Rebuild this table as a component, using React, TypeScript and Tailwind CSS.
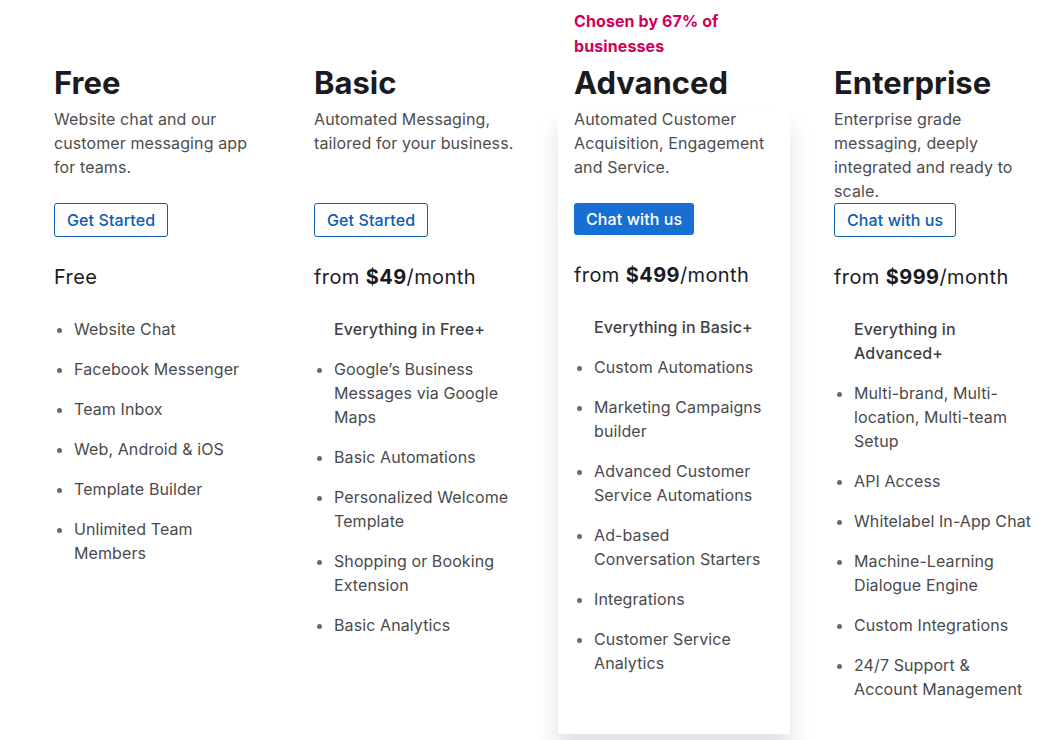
import React from 'react';

interface Plan {
  name: string;
  tag?: string;
  description: string;
  cta: string;
  primary?: boolean;
  price?: string;
  includes?: string;
  features: string[];
}

const plans: Plan[] = [
  {
    name: 'Free',
    description: 'Website chat and our customer messaging app for teams.',
    cta: 'Get Started',
    features: [
      'Website Chat',
      'Facebook Messenger',
      'Team Inbox',
      'Web, Android & iOS',
      'Template Builder',
      'Unlimited Team Members',
    ],
  },
  {
    name: 'Basic',
    description: 'Automated Messaging, tailored for your business.',
    cta: 'Get Started',
    price: '$49',
    includes: 'Everything in Free+',
    features: [
      'Google’s Business Messages via Google Maps',
      'Basic Automations',
      'Personalized Welcome Template',
      'Shopping or Booking Extension',
      'Basic Analytics',
    ],
  },
  {
    name: 'Advanced',
    tag: 'Chosen by 67% of businesses',
    description: 'Automated Customer Acquisition, Engagement and Service.',
    cta: 'Chat with us',
    primary: true,
    price: '$499',
    includes: 'Everything in Basic+',
    features: [
      'Custom Automations',
      'Marketing Campaigns builder',
      'Advanced Customer Service Automations',
      'Ad-based Conversation Starters',
      'Integrations',
      'Customer Service Analytics',
    ],
  },
  {
    name: 'Enterprise',
    description: 'Enterprise grade messaging, deeply integrated and ready to scale.',
    cta: 'Chat with us',
    price: '$999',
    includes: 'Everything in Advanced+',
    features: [
      'Multi-brand, Multi-location, Multi-team Setup',
      'API Access',
      'Whitelabel In-App Chat',
      'Machine-Learning Dialogue Engine',
      'Custom Integrations',
      '24/7 Support & Account Management',
    ],
  },
];

function PlanBody({ plan }: { plan: Plan }) {
  return (
    <>
      <p className="min-h-[96px] text-[16px] leading-6 text-[#4d4d4f]">{plan.description}</p>

      {plan.primary ? (
        <button className="h-8 self-start rounded-[3px] bg-[#1670d3] px-3 text-[16px] font-medium text-white">
          {plan.cta}
        </button>
      ) : (
        <button className="h-[34px] self-start rounded-[3px] border border-[#0b5cb5] px-3 text-[16px] font-medium text-[#0b5cb5]">
          {plan.cta}
        </button>
      )}

      <div className="mt-[26px] text-[20px] leading-7 tracking-[0.4px] text-[#1b1b1f]">
        {plan.price ? (
          <>
            from <span className="font-bold">{plan.price}</span>/month
          </>
        ) : (
          'Free'
        )}
      </div>

      <div className="mt-[26px] flex flex-col gap-4 text-[16px] leading-6 text-[#4a4a4c]">
        {plan.includes && <div className="pl-5 font-medium text-[#3f3f42]">{plan.includes}</div>}
        <ul className="flex list-disc flex-col gap-4 pl-5 marker:text-[#6b6b6e]">
          {plan.features.map((f) => (
            <li key={f}>{f}</li>
          ))}
        </ul>
      </div>
    </>
  );
}

export default function App() {
  return (
    <div className="min-h-[740px] overflow-hidden bg-white font-['Inter',_'Liberation_Sans',_sans-serif] tracking-[0.1px]">
      <div className="flex gap-[60px] pl-[54px] pt-[9px]">
        {plans.map((plan) => (
          <div key={plan.name} className="flex w-[200px] shrink-0 flex-col">
            <div className="flex h-[50px] items-start text-[16px] font-bold leading-[25px] text-[#d1005b]">
              {plan.tag}
            </div>
            <h2 className="text-[31px] font-bold leading-[48px] tracking-[0px] text-[#1b1b1f]">{plan.name}</h2>
            {plan.primary ? (
              <div className="-mx-4 flex flex-col bg-white px-4 pb-[59px] shadow-[0_20px_22px_rgba(30,45,70,0.14)]">
                <PlanBody plan={plan} />
              </div>
            ) : (
              <div className="flex flex-col">
                <PlanBody plan={plan} />
              </div>
            )}
          </div>
        ))}
      </div>
    </div>
  );
}
